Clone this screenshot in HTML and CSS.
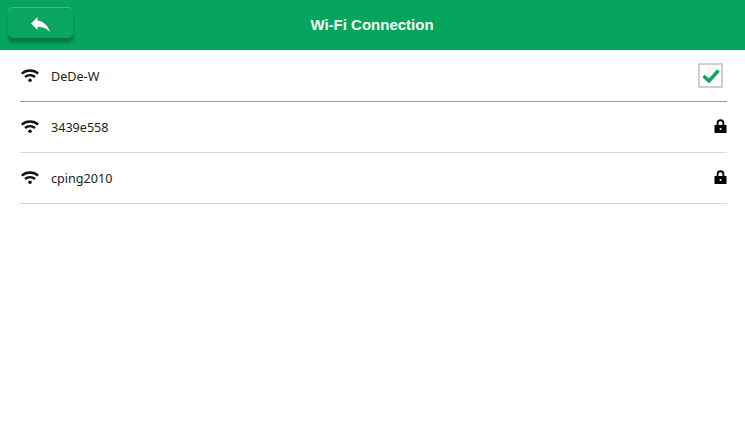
FILE: index.html
```html
<!DOCTYPE html>
<html>
<head>
	<title>Wi-Fi Connection</title>
	<link rel="stylesheet" href="styles.css">
</head>
<body>
	<svg class="icon-defs" width="0" height="0">
		<symbol id="wifi" viewBox="0 0 18 13">
			<path d="M0.8 4.6C5.4 0.4 12.6 0.4 17.2 4.6" fill="none" stroke="#111" stroke-width="2.5"/>
			<path d="M4 8C6.9 5.5 11.1 5.5 14 8" fill="none" stroke="#111" stroke-width="2.5"/>
			<circle cx="9" cy="11.2" r="1.8" fill="#111"/>
		</symbol>
		<symbol id="lock" viewBox="0 0 13 14">
			<path d="M3.6 7V4.2C3.6 2.4 4.7 1.2 6.5 1.2S9.4 2.4 9.4 4.2V7" fill="none" stroke="#000" stroke-width="1.9"/>
			<rect x="0.5" y="6" width="12" height="8" rx="0.6" fill="#000"/>
			<circle cx="6.5" cy="10" r="1" fill="#fff"/>
		</symbol>
	</svg>

	<div class="top-bar">
		<button class="back-btn">
			<svg width="19" height="15" viewBox="0 0 19 15">
				<path d="M0 6.5L6.5 0V3.6C12 4.2 17 8.5 19 15C15.5 11.5 12 10 6.5 9.8V13Z" fill="#fff"/>
			</svg>
		</button>
		<div class="top-title">Wi-Fi Connection</div>
	</div>

	<div class="wifi-list">
		<div class="wifi-row first">
			<svg class="wifi-icon"><use href="#wifi"/></svg>
			<span class="wifi-name">DeDe-W</span>
			<span class="check-box">
				<svg width="18" height="14" viewBox="0 0 18 14">
					<path d="M1.5 7L7 12L16.5 1.5" fill="none" stroke="#0aa65f" stroke-width="3.4"/>
				</svg>
			</span>
		</div>
		<div class="wifi-row">
			<svg class="wifi-icon"><use href="#wifi"/></svg>
			<span class="wifi-name">3439e558</span>
			<svg class="lock-icon"><use href="#lock"/></svg>
		</div>
		<div class="wifi-row">
			<svg class="wifi-icon"><use href="#wifi"/></svg>
			<span class="wifi-name">cping2010</span>
			<svg class="lock-icon"><use href="#lock"/></svg>
		</div>
	</div>
</body>
</html>
```
FILE: styles.css
```css
body,html{
	margin:0;
	background: white;
	font-family: "Noto Sans", sans-serif;
}

.icon-defs{
	display:block;
	height:0;
}

.top-bar{
	height:50px;
	background:#05a55d;
	display:flex;
	align-items:center;
	justify-content:center;
	position:relative;
}

.top-title{
	color:#f4fbf7;
	font-family:"Liberation Sans", sans-serif;
	font-weight:bold;
	font-size:15px;
	margin:0 0 2px -1px;
}

.back-btn{
	position:absolute;
	left:8px;
	top:7px;
	width:65px;
	height:31px;
	padding:5px 0 0 0;
	background:#0aa65f;
	border:0;
	border-top:1px solid #3fbb83;
	border-radius:5px;
	box-shadow:0 3px 0 #067a45, 0 5px 3px rgba(0,0,0,0.25);
}

.wifi-list{
	margin:0 18px 0 20px;
}

.wifi-row{
	height:50px;
	border-bottom:1px solid #d8d8d8;
	display:flex;
	align-items:center;
	font-size:12.6px;
	color:#222;
}

.wifi-row.first{
	height:51px;
	border-bottom-color:#9a9a9a;
}

.wifi-icon{
	width:18px;
	height:13px;
	margin:0 12px 1px 1px;
	flex:none;
}

.wifi-name{
	flex:1;
	padding-top:1px;
}

.lock-icon{
	width:13px;
	height:14px;
	margin-bottom:2px;
	flex:none;
}

.check-box{
	width:21px;
	height:21px;
	margin-right:4px;
	border:2px solid #cfcfcf;
	display:flex;
	align-items:center;
	justify-content:center;
}
```
